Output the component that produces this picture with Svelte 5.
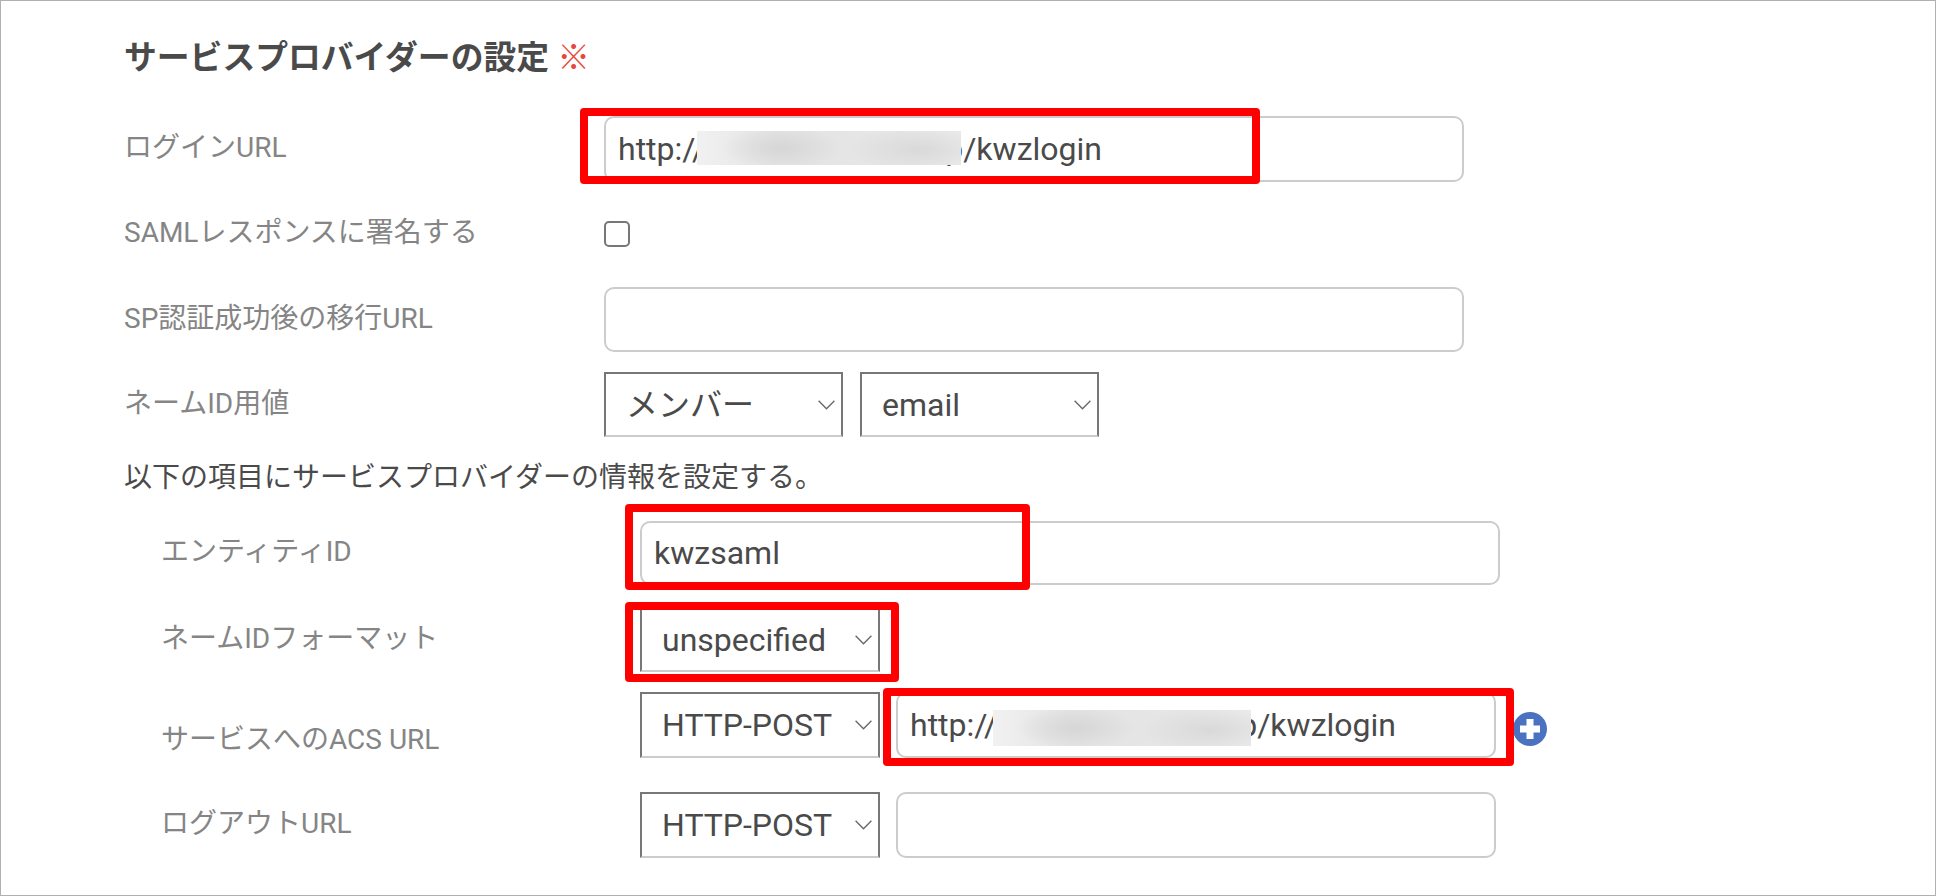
<script>
  // http binding options shown in both service rows
  const bindings = ['HTTP-POST', 'HTTP-Redirect'];
</script>

{#snippet chevron()}
  <svg class="chevron" viewBox="0 0 17 10" aria-hidden="true">
    <path d="M.6.8l7.9 8 7.9-8" fill="none" stroke="#666" stroke-width="1.3" />
  </svg>
{/snippet}

{#snippet picker(options, width)}
  <div class="picker {width}">
    <select>
      {#each options as o}
        <option>{o}</option>
      {/each}
    </select>
    {@render chevron()}
  </div>
{/snippet}

{#snippet hiddenUrl(size)}
  <div class="field url {size}">
    <span>http://</span><span class="blur {size}"></span><span class="peek {size}">p</span><span>/kwzlogin</span>
  </div>
{/snippet}

<div class="page">
  <h2>サービスプロバイダーの設定 <span class="req">※</span></h2>

  <div class="row login">
    <div class="label">ログインURL</div>
    {@render hiddenUrl('wide')}
  </div>

  <div class="row saml">
    <div class="label">SAMLレスポンスに署名する</div>
    <input type="checkbox" class="check" />
  </div>

  <div class="row sp">
    <div class="label">SP認証成功後の移行URL</div>
    <input class="field wide" />
  </div>

  <div class="row nameid">
    <div class="label">ネームID用値</div>
    <div class="pair">
      {@render picker(['メンバー'], 'member')}
      {@render picker(['email'], 'member')}
    </div>
  </div>

  <p class="note">以下の項目にサービスプロバイダーの情報を設定する。</p>

  <div class="sub">
    <div class="row entity">
      <div class="label">エンティティID</div>
      <input class="field wide" value="kwzsaml" />
    </div>

    <div class="row format">
      <div class="label">ネームIDフォーマット</div>
      {@render picker(['unspecified'], 'binding')}
    </div>

    <div class="row acs">
      <div class="label low">サービスへのACS URL</div>
      <div class="pair tight">
        {@render picker(bindings, 'binding')}
        {@render hiddenUrl('narrow')}
        <button class="add" aria-label="追加">
          <svg viewBox="0 0 34 34">
            <circle cx="17" cy="17" r="17" fill="#4a72c0" />
            <path d="M13.5 7h7v6.5H27v7h-6.5V27h-7v-6.5H7v-7h6.5z" fill="#fff" />
          </svg>
        </button>
      </div>
    </div>

    <div class="row logout">
      <div class="label">ログアウトURL</div>
      <div class="pair tight">
        {@render picker(bindings, 'binding')}
        <input class="field narrow" />
      </div>
    </div>
  </div>

  <!-- red annotation boxes drawn on top of the form -->
  <div class="mark m1"></div>
  <div class="mark m2"></div>
  <div class="mark m3"></div>
  <div class="mark m4"></div>
</div>

<style>
  :global(body) {
    margin: 0;
    background: #fff;
  }

  .page {
    position: relative;
    box-sizing: border-box;
    height: 896px;
    padding: 0 0 0 123px;
    border: 1px solid #b0b0b0;
    overflow: hidden;
    font-family: Roboto, "Noto Sans CJK JP", sans-serif;
    color: #4a4a4a;
  }

  h2 {
    margin: 0;
    padding-top: 39px;
    height: 40px;
    line-height: 36px;
    font-size: 32.8px;
    font-weight: 700;
    color: #4a4a4a;
  }

  .req {
    font-weight: 400;
    color: #e8473a;
  }

  .row {
    display: flex;
    align-items: center;
    height: 65px;
  }

  .label {
    width: 480px;
    flex: none;
    font-size: 28px;
    line-height: 36px;
    color: #858585;
    margin-top: -2px;
  }

  .label.low {
    margin-top: 29px;
  }

  .login { margin-top: 36px; height: 66px; }
  .saml { margin-top: 19px; height: 66px; }
  .sp { margin-top: 20px; }
  .nameid { margin-top: 20px; }

  .note {
    margin: 23px 0 0;
    line-height: 36px;
    font-size: 28px;
    color: #4a4a4a;
  }

  .sub {
    padding-left: 37px;
  }

  .sub .label {
    width: 479px;
  }

  .entity { margin-top: 25px; height: 64px; }
  .format { margin-top: 22px; }
  .acs { margin-top: 20px; height: 66px; }
  .logout { margin-top: 34px; height: 66px; }

  .field {
    box-sizing: border-box;
    height: 100%;
    border: 2px solid #ccc;
    border-radius: 10px;
    padding: 0 12px;
    font: inherit;
    font-size: 32px;
    color: #4a4a4a;
    background: #fff;
    outline: none;
  }

  .field.wide { width: 860px; }
  .field.narrow { width: 600px; }

  .url {
    display: flex;
    align-items: center;
  }

  .blur {
    display: block;
    flex: none;
    position: relative;
    z-index: 1;
    background:
      radial-gradient(ellipse 60px 22px at 32% 50%, #d6d6d6, rgba(214, 214, 214, 0)),
      radial-gradient(ellipse 70px 24px at 84% 55%, #d9d9d9, rgba(217, 217, 217, 0)),
      linear-gradient(90deg, #f1f1f1 0%, #e4e4e4 30%, #e6e6e6 70%, #ebebeb 100%);
  }

  .blur.wide {
    width: 264px;
    height: 34px;
    margin: -3px 0 0 -8px;
  }

  .blur.narrow {
    width: 258px;
    height: 36px;
    margin: 6px 0 0 -4px;
  }

  /* last character of the masked host, mostly under the blur */
  .peek.wide { margin-left: -16px; }
  .peek.narrow { margin-left: -12px; }

  .check {
    appearance: none;
    box-sizing: border-box;
    width: 26px;
    height: 26px;
    margin: 0;
    border: 2px solid #777;
    border-radius: 5px;
    background: #fff;
  }

  .pair {
    display: flex;
    height: 100%;
    gap: 17px;
  }

  .pair.tight {
    gap: 16px;
  }

  .picker {
    position: relative;
    height: 100%;
  }

  .picker.member { width: 239px; }
  .picker.binding { width: 240px; }

  select {
    appearance: none;
    box-sizing: border-box;
    display: block;
    width: 100%;
    height: 100%;
    padding: 0 0 0 20px;
    border: 2px solid #777;
    border-bottom-color: #ccc;
    border-radius: 0;
    background: #fff;
    font: inherit;
    font-size: 32px;
    color: #4a4a4a;
    outline: none;
  }

  .chevron {
    position: absolute;
    right: 8px;
    top: 28px;
    width: 17px;
    height: 10px;
    pointer-events: none;
  }

  .add {
    align-self: center;
    width: 34px;
    height: 34px;
    margin: 8px 0 0 1px;
    padding: 0;
    border: 0;
    background: none;
  }

  .add svg {
    display: block;
  }

  .mark {
    position: absolute;
    z-index: 2;
    box-sizing: border-box;
    border: 8px solid #ff0000;
    border-radius: 4px;
    pointer-events: none;
  }

  .m1 { left: 579px; top: 107px; width: 680px; height: 76px; }
  .m2 { left: 624px; top: 503px; width: 405px; height: 86px; }
  .m3 { left: 624px; top: 601px; width: 274px; height: 80px; }
  .m4 { left: 882px; top: 687px; width: 631px; height: 78px; }
</style>
